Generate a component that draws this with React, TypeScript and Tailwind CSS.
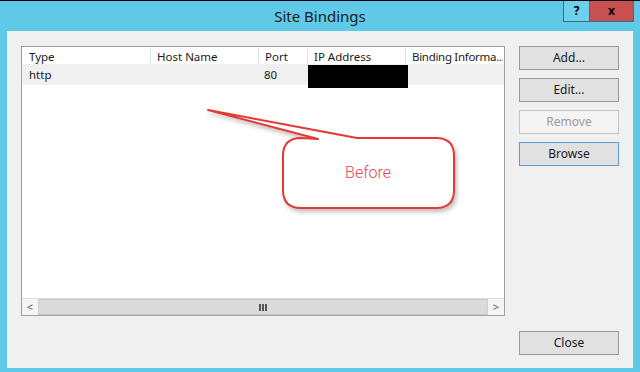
import React from "react";

const ui = { fontFamily: '"Noto Sans", "Segoe UI", sans-serif' };

function DlgButton({ label, kind = "normal" }: { label: string; kind?: "normal" | "disabled" | "focus" }) {
  const base = "w-[100px] h-[24px] flex items-center justify-center text-[12px] border";
  if (kind === "disabled") {
    return <div className={`${base} bg-[#f4f4f4] border-[#c4c4c4] text-[#9a9a9a]`}>{label}</div>;
  }
  if (kind === "focus") {
    return <div className={`${base} bg-[#e1e1e1] border-[#5b9bd5] text-[#1a1a1a]`}>{label}</div>;
  }
  return <div className={`${base} bg-[#e1e1e1] border-[#9a9a9a] text-[#1a1a1a]`}>{label}</div>;
}

function Callout() {
  // annotation drawn over the list view
  return (
    <svg className="absolute left-0 top-0 pointer-events-none" width="626" height="337" viewBox="0 0 626 337">
      <defs>
        <filter id="sh" x="-10%" y="-10%" width="130%" height="140%">
          <feDropShadow dx="2" dy="3" stdDeviation="2" floodColor="#000" floodOpacity="0.25" />
        </filter>
      </defs>
      <path
        d="M350 107 L429 107 Q447 107 447 125 L447 159 Q447 177 429 177 L294 177 Q276 177 276 159 L276 125 Q276 107 294 107 L311 108 L201 79 Z"
        fill="#fff"
        stroke="#e53935"
        strokeWidth="2"
        strokeLinejoin="round"
        filter="url(#sh)"
      />
      <text x="361" y="147" textAnchor="middle" fontFamily="Roboto, sans-serif" fontWeight="300" fontSize="16" fill="#e8464a">
        Before
      </text>
    </svg>
  );
}

export default function App() {
  return (
    <div className="w-[640px] h-[372px] bg-[#5fc9e7] border-t border-black flex flex-col overflow-hidden" style={ui}>
      <div className="h-[30px] flex relative">
        <div className="flex-1 flex items-center justify-center text-[15px] text-[#1a1a1a] pt-[1px]">Site Bindings</div>
        <div className="absolute right-[6px] top-0 flex">
          <div className="w-[27px] h-[21px] border border-[#3b6f80] border-t-0 bg-[#6fd0ec] flex items-center justify-center text-[12px] font-bold text-black">
            ?
          </div>
          <div className="w-[44px] h-[21px] border border-[#3b6f80] border-t-0 border-l-0 bg-[#c75050] flex items-center justify-center text-[12px] font-bold text-black">
            x
          </div>
        </div>
      </div>
      <div className="mx-[7px] mb-[4px] flex-1 bg-[#f0f0f0] relative flex pt-[15px] pl-[14px] gap-[14px]">
        <div className="w-[484px] h-[270px] border border-[#a0a0a0] bg-white flex flex-col text-[11.5px] text-[#1a1a1a]">
          <div className="h-[18px] flex items-center pt-[2px] border-b border-[#f0f0f0]">
            <div className="w-[128px] pl-[7px]">Type</div>
            <div className="w-[108px] pl-[6px] border-l border-[#e3e3e3]">Host Name</div>
            <div className="w-[49px] pl-[6px] border-l border-[#e3e3e3]">Port</div>
            <div className="w-[98px] pl-[6px] border-l border-[#e3e3e3]">IP Address</div>
            <div className="w-[98px] pl-[6px] border-l border-[#e3e3e3] whitespace-nowrap overflow-hidden tracking-[-0.3px]">
              Binding Informa...
            </div>
          </div>
          <div className="h-[20px] flex items-start bg-[#f0f0f0]">
            <div className="w-[128px] pl-[7px] leading-[20px]">http</div>
            <div className="w-[108px]" />
            <div className="w-[49px] pl-[6px] leading-[20px]">80</div>
            <div className="w-[98px] pl-[1px]">
              <div className="w-[100px] h-[23px] bg-black" />
            </div>
          </div>
          <div className="flex-1" />
          <div className="h-[17px] flex border-t border-[#dcdcdc]">
            <div className="w-[17px] bg-[#f4f4f4] border-r border-[#d0d0d0] flex items-center justify-center text-[11px] text-[#606060]">
              &lt;
            </div>
            <div className="flex-1 bg-[#dadada] border-y border-[#c6c6c6] flex items-center justify-center">
              <div className="flex gap-[1px] h-[7px]">
                <div className="w-[2px] bg-[#555]" />
                <div className="w-[2px] bg-[#555]" />
                <div className="w-[2px] bg-[#555]" />
              </div>
            </div>
            <div className="w-[17px] bg-[#f4f4f4] border-l border-[#d0d0d0] flex items-center justify-center text-[11px] text-[#606060]">
              &gt;
            </div>
          </div>
        </div>
        <div className="flex flex-col">
          <div className="flex flex-col gap-[8px]">
            <DlgButton label="Add..." />
            <DlgButton label="Edit..." />
            <DlgButton label="Remove" kind="disabled" />
            <DlgButton label="Browse" kind="focus" />
          </div>
          <div className="mt-auto mb-[13px]">
            <DlgButton label="Close" />
          </div>
        </div>
        <Callout />
      </div>
    </div>
  );
}
